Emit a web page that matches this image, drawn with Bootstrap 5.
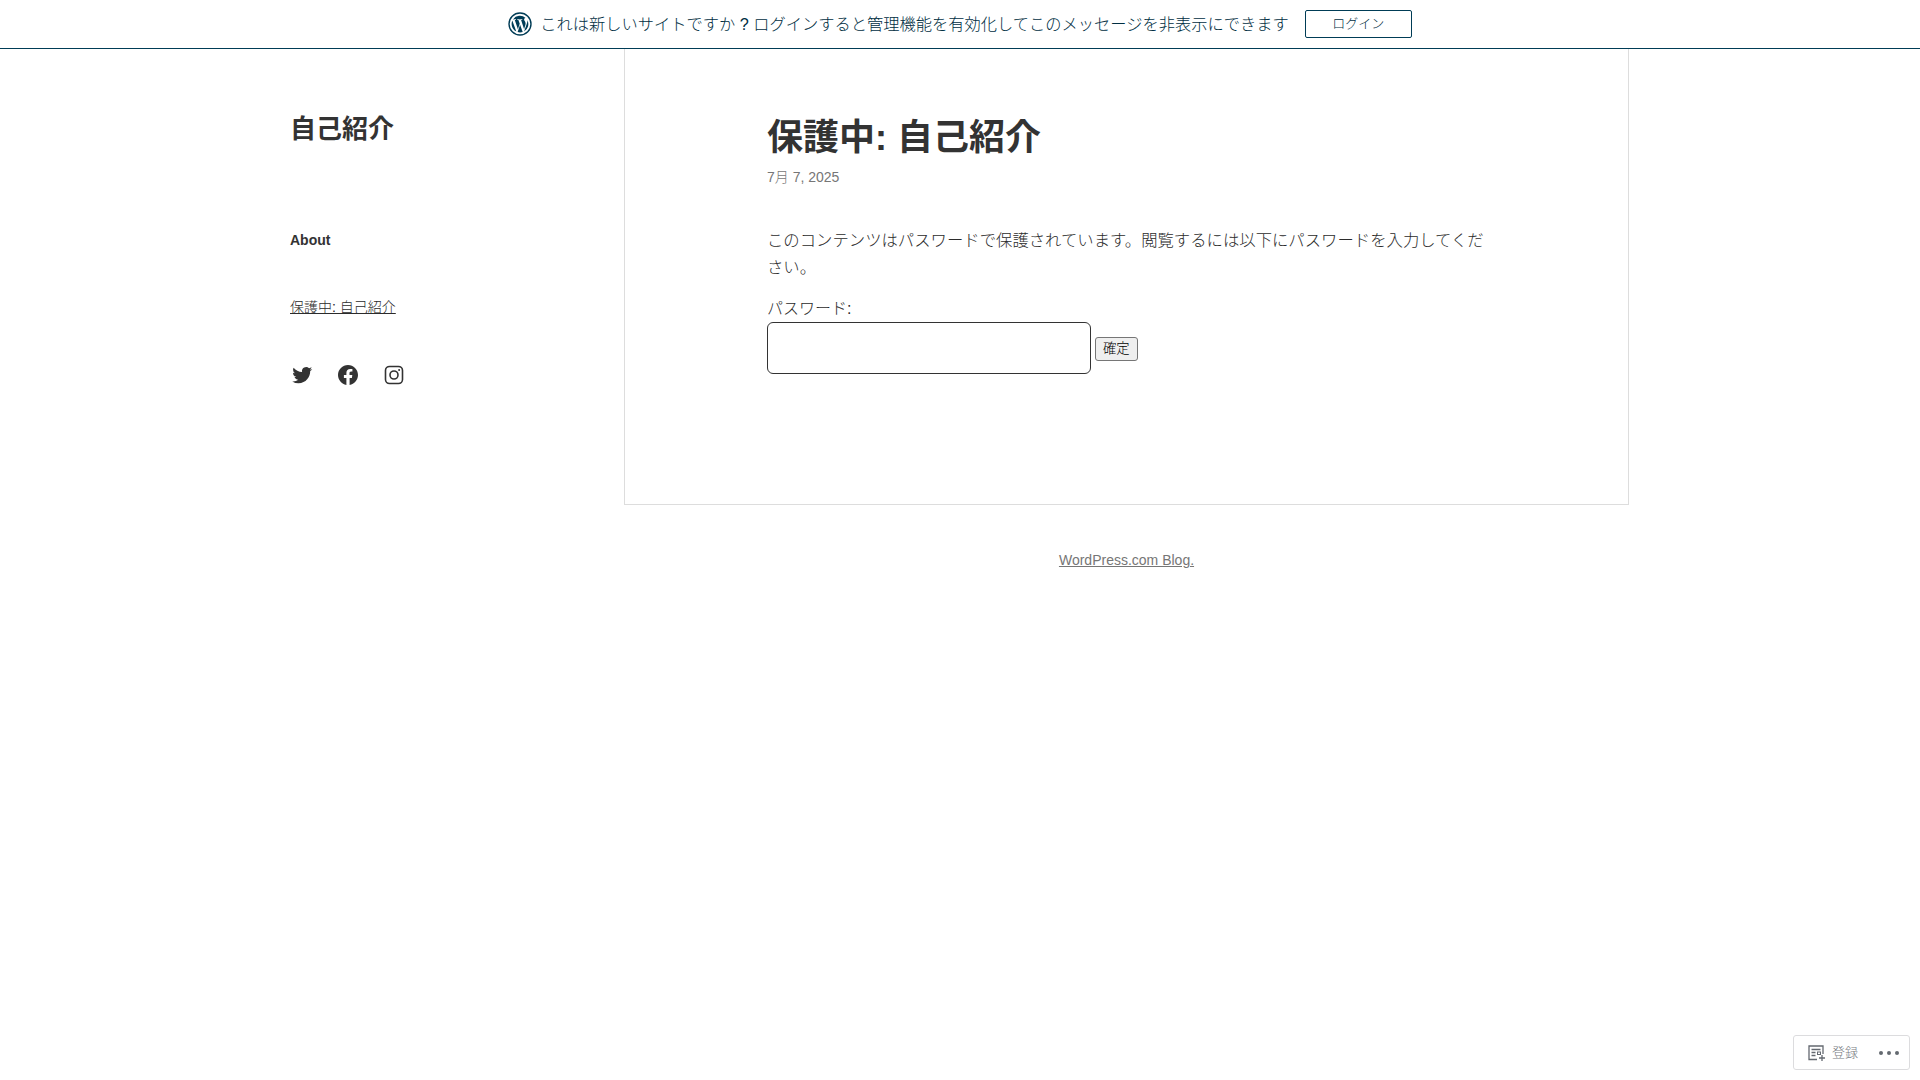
<!DOCTYPE html>
<html lang="ja"><head><meta charset="utf-8">
<link href="https://cdn.jsdelivr.net/npm/bootstrap@5.3.0/dist/css/bootstrap.min.css" rel="stylesheet">
<style>
body{font-family:"Liberation Sans","Noto Sans CJK JP",sans-serif;color:#2b2b2b;background:#fff;font-size:16px;font-weight:300}
.topbar{height:49px;border-bottom:1px solid #003c56;gap:16px;color:#002e42}
.topbar-text{font-size:16.25px;line-height:24px}
.login-btn{width:107px;height:28px;border:1px solid #003c56;border-radius:2px;color:#002e42;font-size:13px;line-height:26px;text-align:center;text-decoration:none}
.shell{width:1339px;margin-left:290px}
.side{width:334px;padding-top:63px}
.site-name{font-size:26px;font-weight:700;line-height:34px;color:#333;margin:0}
.side-nav{margin-top:84px;font-size:14px}
.side-nav a{color:#2b2b2b;display:block;line-height:20px}
.side-nav .cur{font-weight:700;color:#333;text-decoration:none}
.side-nav .sub{margin-top:47px}
.socials{margin-top:46px;gap:22px}
.post{width:1005px;height:456px;border:1px solid #ddd;border-top:0;padding:66px 137px 0 142px}
.post-title{font-size:36px;font-weight:700;line-height:45px;margin:0;color:#333}
.post-date{font-size:14px;color:#767676;line-height:20px;margin-top:7px}
.post-body{margin-top:40px;line-height:27px;font-size:16.38px}
.pw-label{margin-top:15px;line-height:26px}
.pw-input{width:324px;height:52px;border:1px solid #333;border-radius:6px;background:#fff}
.pw-btn{font-size:13.33px;font-weight:300;height:24px;padding:1px 7px;border:1px solid #767676;border-radius:3px;background:#efefef;color:#000;margin:2px 0 0 4px}
.foot-link{margin-left:624px;width:1005px;text-align:center;font-size:14px;margin-top:45px;line-height:20px}
.foot-link a{color:#767676}
.follow{position:fixed;right:10px;bottom:10px;width:117px;height:35px;background:#fff;border:1px solid #dcdcde;border-radius:3px;color:#787c82;font-size:13px;padding:0 10px 0 13px;gap:7px}
.dots{margin-left:auto;gap:4px}
.dots i{width:4px;height:4px;border-radius:50%;background:#646970;display:block}
</style></head><body>
<div class="topbar d-flex align-items-center justify-content-center">
<div class="d-flex align-items-center" style="gap:8px">
<svg width="24" height="24" viewBox="0 0 24 24" fill="#003c56"><circle cx="12" cy="12" r="11" fill="none" stroke="#003c56" stroke-width="1.4"/><path d="M3.6 12a8.4 8.4 0 0 0 4.7 7.5L4.3 8.6A8.4 8.4 0 0 0 3.6 12zm14-.4c0-1-.4-1.8-.7-2.3-.4-.7-.8-1.200-.8-1.900 0-.7.6-1.400 1.400-1.400h.1A8.400 8.400 0 0 0 5 7.400h.5c.9 0 2.200-.1 2.200-.1.400 0 .5.700 0 .7l-.9.100 3.100 9.100 1.800-5.400-1.300-3.700-.9-.1c-.4 0-.4-.7.1-.7 0 0 1.400.1 2.200.1.900 0 2.200-.1 2.200-.1.400 0 .5.700 0 .7l-.9.100 3 9.100.8-2.800c.4-1.100.7-1.900.7-2.600zm-5.500 1.200-2.500 7.300a8.400 8.400 0 0 0 5.200-.1l-.1-.1zm7.200-4.700.1.900c0 .8-.2 1.800-.7 3l-2.600 7.400a8.400 8.400 0 0 0 3.200-11.300z"/></svg>
<span class="topbar-text">これは新しいサイトですか ? ログインすると管理機能を有効化してこのメッセージを非表示にできます</span>
</div>
<a class="login-btn" href="#">ログイン</a>
</div>
<div class="shell d-flex">
<aside class="side">
<p class="site-name">自己紹介</p>
<nav class="side-nav"><a class="cur" href="#">About</a><a class="sub" href="#">保護中: 自己紹介</a></nav>
<div class="socials d-flex">
<svg width="24" height="24" viewBox="0 0 24 24" fill="#333"><path d="M22.230 5.924a8.212 8.212 0 0 1-2.357.646 4.115 4.115 0 0 0 1.804-2.270 8.221 8.221 0 0 1-2.606.996 4.103 4.103 0 0 0-6.991 3.742 11.647 11.647 0 0 1-8.457-4.287 4.087 4.087 0 0 0-.556 2.063 4.100 4.100 0 0 0 1.825 3.415 4.090 4.090 0 0 1-1.859-.513v.052a4.104 4.104 0 0 0 3.292 4.023 4.099 4.099 0 0 1-1.853.070 4.110 4.110 0 0 0 3.833 2.850 8.236 8.236 0 0 1-5.096 1.756 8.330 8.330 0 0 1-.979-.057 11.617 11.617 0 0 0 6.290 1.843c7.547 0 11.675-6.252 11.675-11.675 0-.178-.004-.355-.012-.531a8.298 8.298 0 0 0 2.047-2.123z"/></svg>
<svg width="24" height="24" viewBox="0 0 24 24" fill="#333"><path d="M12 2C6.500 2 2 6.500 2 12c0 5 3.700 9.100 8.400 9.900v-7H7.900V12h2.500V9.800c0-2.500 1.500-3.900 3.800-3.900 1.100 0 2.200.2 2.200.2v2.500h-1.300c-1.200 0-1.600.8-1.600 1.600V12h2.800l-.4 2.900h-2.300v7C18.300 21.100 22 17 22 12c0-5.500-4.500-10-10-10z"/></svg>
<svg width="24" height="24" viewBox="0 0 24 24" fill="none" stroke="#333" stroke-width="1.600"><rect x="3.500" y="3.500" width="17" height="17" rx="4"/><circle cx="12" cy="12" r="4"/><circle cx="17.100" cy="6.900" r="1" fill="#333" stroke="none"/></svg>
</div>
</aside>
<main class="post">
<h1 class="post-title">保護中: 自己紹介</h1>
<div class="post-date">7月 7, 2025</div>
<div class="post-body">このコンテンツはパスワードで保護されています。閲覧するには以下にパスワードを入力してください。</div>
<div class="pw-label">パスワード:</div>
<div class="d-flex align-items-center"><div class="pw-input"></div><button class="pw-btn">確定</button></div>
</main>
</div>
<div class="foot-link"><a href="#">WordPress.com Blog.</a></div>
<div class="follow d-flex align-items-center">
<svg width="18" height="18" viewBox="0 0 18 18" fill="none" stroke="#646970" stroke-width="1.300"><path d="M10 15.500H2V2h14v8"/><path d="M4.500 5.500h9M4.500 8.500h4M4.500 11.500h4"/><rect x="10.500" y="8" width="3" height="2.500" stroke-width="1"/><path d="M15 11v6M12 14h6"/></svg>
<span>登録</span><span class="dots d-flex"><i></i><i></i><i></i></span>
</div>
</body></html>
